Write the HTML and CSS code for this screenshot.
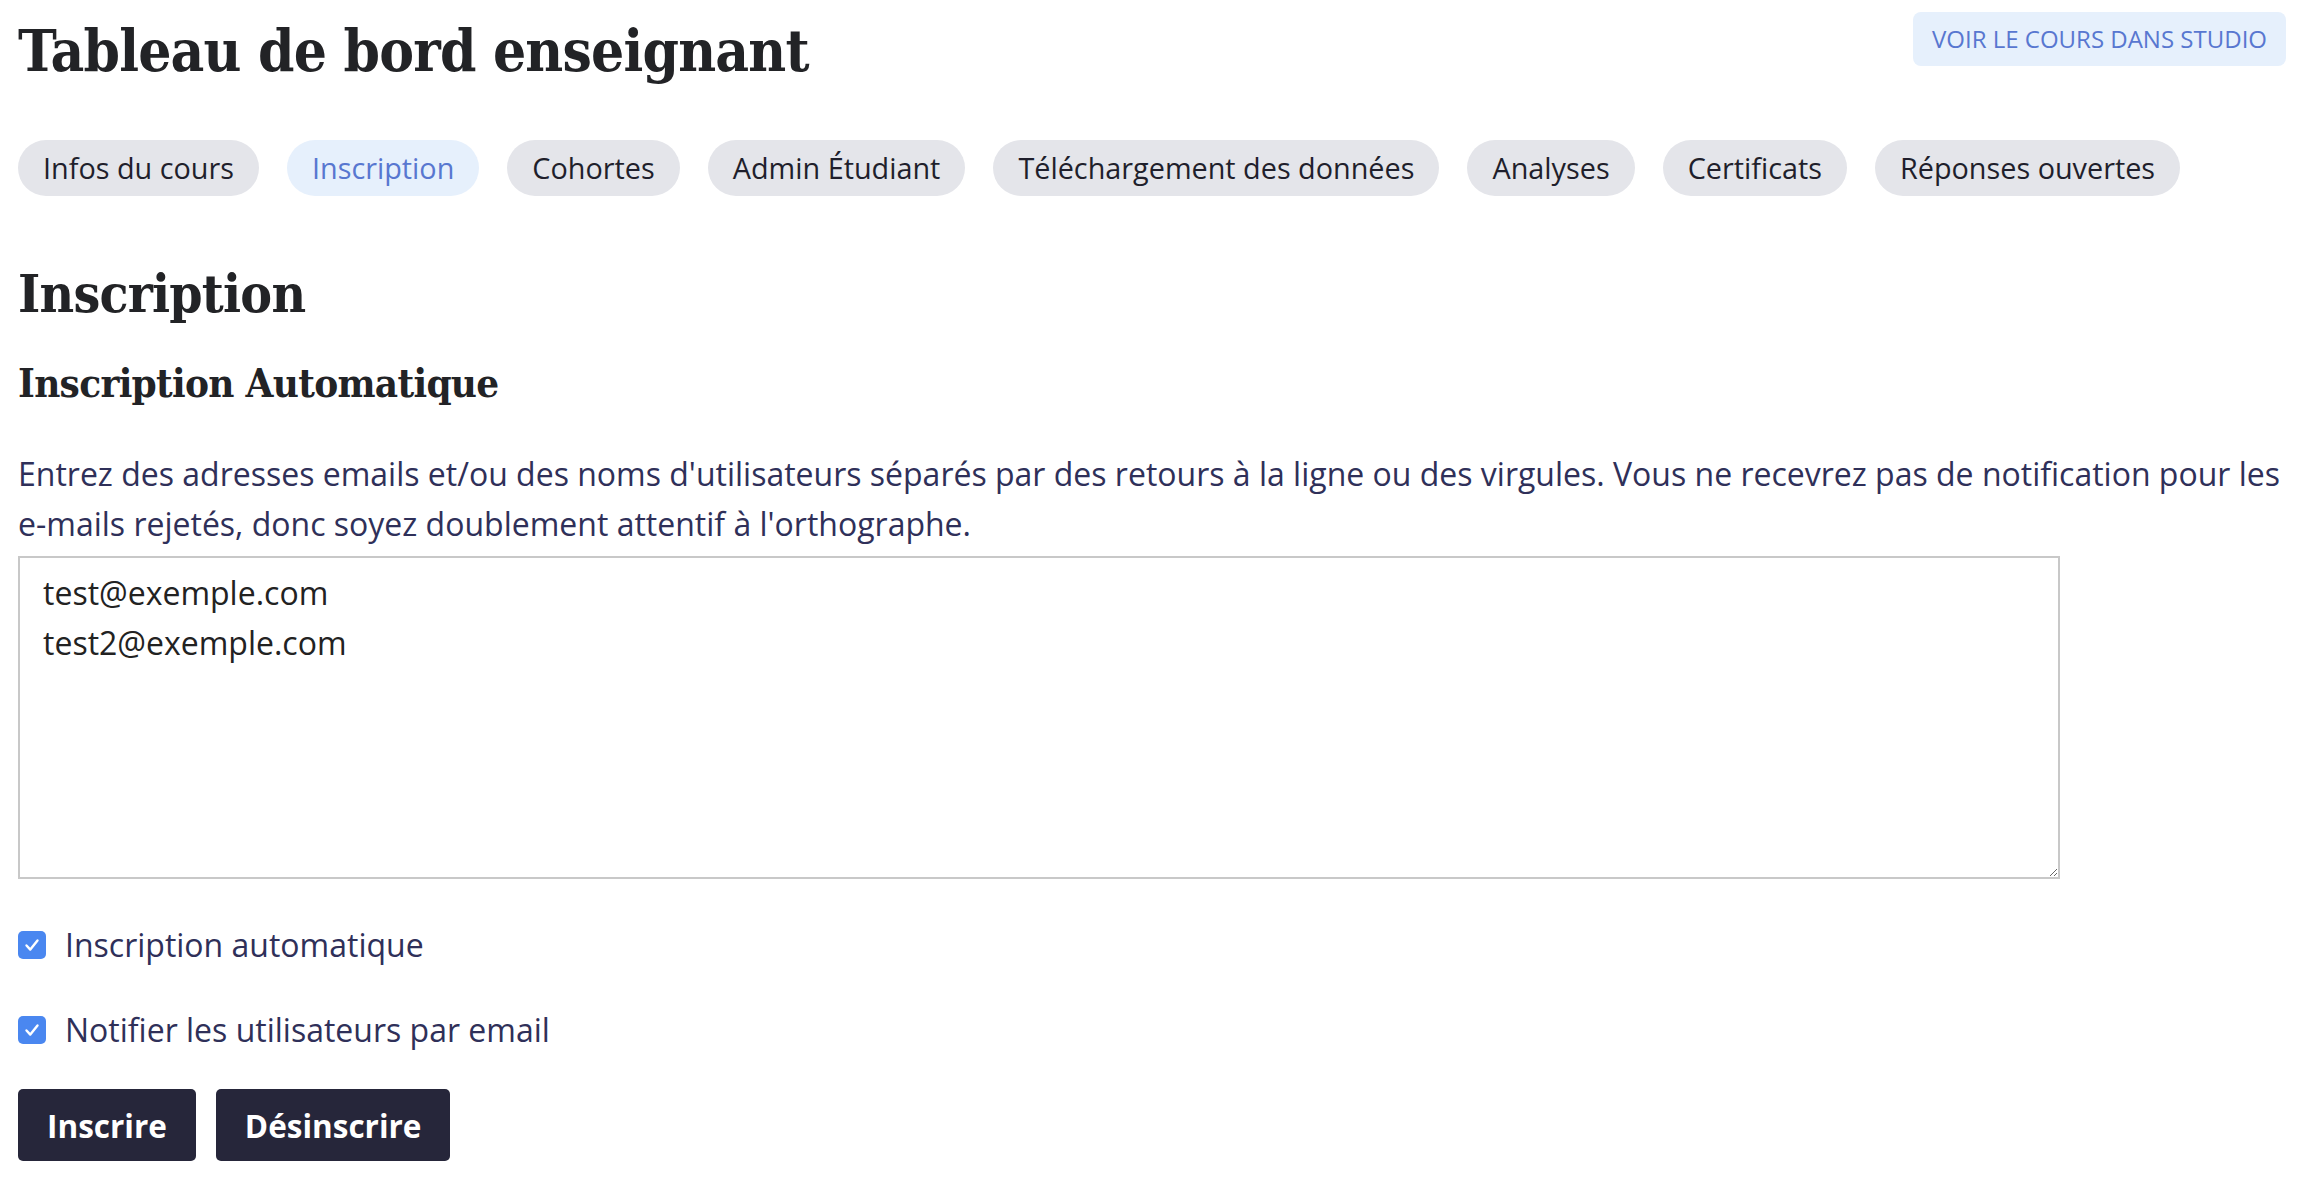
FILE: index.html
```html
<!DOCTYPE html>
<html lang="fr">
<head>
<meta charset="utf-8">
<title>Tableau de bord enseignant</title>
<link rel="stylesheet" href="styles.css">
</head>
<body>
<div class="page">
  <header class="header">
    <h1 class="title">Tableau de bord enseignant</h1>
    <a class="studio-btn" href="#">Voir le cours dans Studio</a>
  </header>
  <nav class="tabs">
    <a class="tab" href="#">Infos du cours</a>
    <a class="tab active" href="#">Inscription</a>
    <a class="tab" href="#">Cohortes</a>
    <a class="tab" href="#">Admin Étudiant</a>
    <a class="tab" href="#">Téléchargement des données</a>
    <a class="tab" href="#">Analyses</a>
    <a class="tab" href="#">Certificats</a>
    <a class="tab" href="#">Réponses ouvertes</a>
  </nav>
  <section class="section">
    <h2 class="h2">Inscription</h2>
    <h3 class="h3">Inscription Automatique</h3>
    <p class="desc">Entrez des adresses emails et/ou des noms d'utilisateurs séparés par des retours à la ligne ou des virgules. Vous ne recevrez pas de notification pour les e-mails rejetés, donc soyez doublement attentif à l'orthographe.</p>
    <textarea class="emails">test@exemple.com
test2@exemple.com</textarea>
    <label class="check-row">
      <span class="check"><svg viewBox="0 0 28 28" width="28" height="28"><path d="M8.5 14.5 L12.3 18.6 L19.5 9.5" fill="none" stroke="#fff" stroke-width="2.4" stroke-linecap="round" stroke-linejoin="round"/></svg></span>
      <span class="check-label">Inscription automatique</span>
    </label>
    <label class="check-row second">
      <span class="check"><svg viewBox="0 0 28 28" width="28" height="28"><path d="M8.5 14.5 L12.3 18.6 L19.5 9.5" fill="none" stroke="#fff" stroke-width="2.4" stroke-linecap="round" stroke-linejoin="round"/></svg></span>
      <span class="check-label">Notifier les utilisateurs par email</span>
    </label>
    <div class="actions">
      <button class="btn" type="button">Inscrire</button>
      <button class="btn" type="button">Désinscrire</button>
    </div>
  </section>
</div>
</body>
</html>
```
FILE: styles.css
```css
* { box-sizing: border-box; }
html, body { margin: 0; padding: 0; background: #fff; }
body {
  font-family: "Open Sans", "Noto Sans", sans-serif;
  color: #2f3059;
}
.page {
  padding: 12px 20px 0 18px;
}
.header {
  display: flex;
  justify-content: space-between;
  align-items: flex-start;
}
.title {
  margin: 0;
  font-family: "DejaVu Serif", "Liberation Serif", serif;
  font-stretch: condensed;
  font-weight: 700;
  font-size: 58px;
  line-height: 78px;
  color: #222326;
  letter-spacing: -0.8px;
}
.studio-btn {
  display: block;
  height: 54px;
  line-height: 54px;
  padding: 0 19px;
  background: #e6f0fc;
  color: #5877d0;
  border-radius: 8px;
  font-size: 24px;
  text-transform: uppercase;
  text-decoration: none;
}
.tabs {
  display: flex;
  gap: 28px;
  margin-top: 50px;
}
.tab {
  display: block;
  height: 56px;
  line-height: 56px;
  padding: 0 25px;
  border-radius: 28px;
  background: #e4e5ea;
  color: #1f1f2c;
  font-size: 28.8px;
  text-decoration: none;
  white-space: nowrap;
}
.tab.active {
  background: #e6f0fc;
  color: #5877d0;
}
.h2 {
  margin: 65px 0 0;
  font-family: "DejaVu Serif", "Liberation Serif", serif;
  font-stretch: condensed;
  font-weight: 700;
  font-size: 53px;
  line-height: 64px;
  color: #222326;
  letter-spacing: -0.8px;
}
.h3 {
  margin: 34px 0 0;
  font-family: "DejaVu Serif", "Liberation Serif", serif;
  font-stretch: condensed;
  font-weight: 700;
  font-size: 40px;
  line-height: 48px;
  color: #222326;
  letter-spacing: -0.7px;
}
.desc {
  margin: 42px 0 0;
  font-size: 32px;
  line-height: 50px;
}
.emails {
  display: block;
  margin-top: 7px;
  width: 2042px;
  height: 323px;
  border: 2px solid #c8c8c8;
  padding: 10px 23px;
  font-family: "Open Sans", "Noto Sans", sans-serif;
  font-size: 32px;
  line-height: 50px;
  color: #222;
  background: #fff;
  resize: vertical;
  outline: none;
}
.check-row {
  display: flex;
  align-items: center;
  gap: 19px;
  height: 50px;
  margin-top: 41px;
}
.check-row.second {
  margin-top: 35px;
}
.check {
  width: 28px;
  height: 28px;
  border-radius: 5px;
  background: #4a87f0;
  display: flex;
}
.check svg { display: block; }
.check-label {
  font-size: 32px;
  line-height: 50px;
}
.actions {
  display: flex;
  gap: 20px;
  margin-top: 34px;
}
.btn {
  height: 72px;
  padding: 0 29px;
  border: 0;
  border-radius: 5px;
  background: #26263a;
  color: #fff;
  font-family: "Open Sans", "Noto Sans", sans-serif;
  font-weight: 700;
  font-size: 31.5px;
  cursor: pointer;
}
```
